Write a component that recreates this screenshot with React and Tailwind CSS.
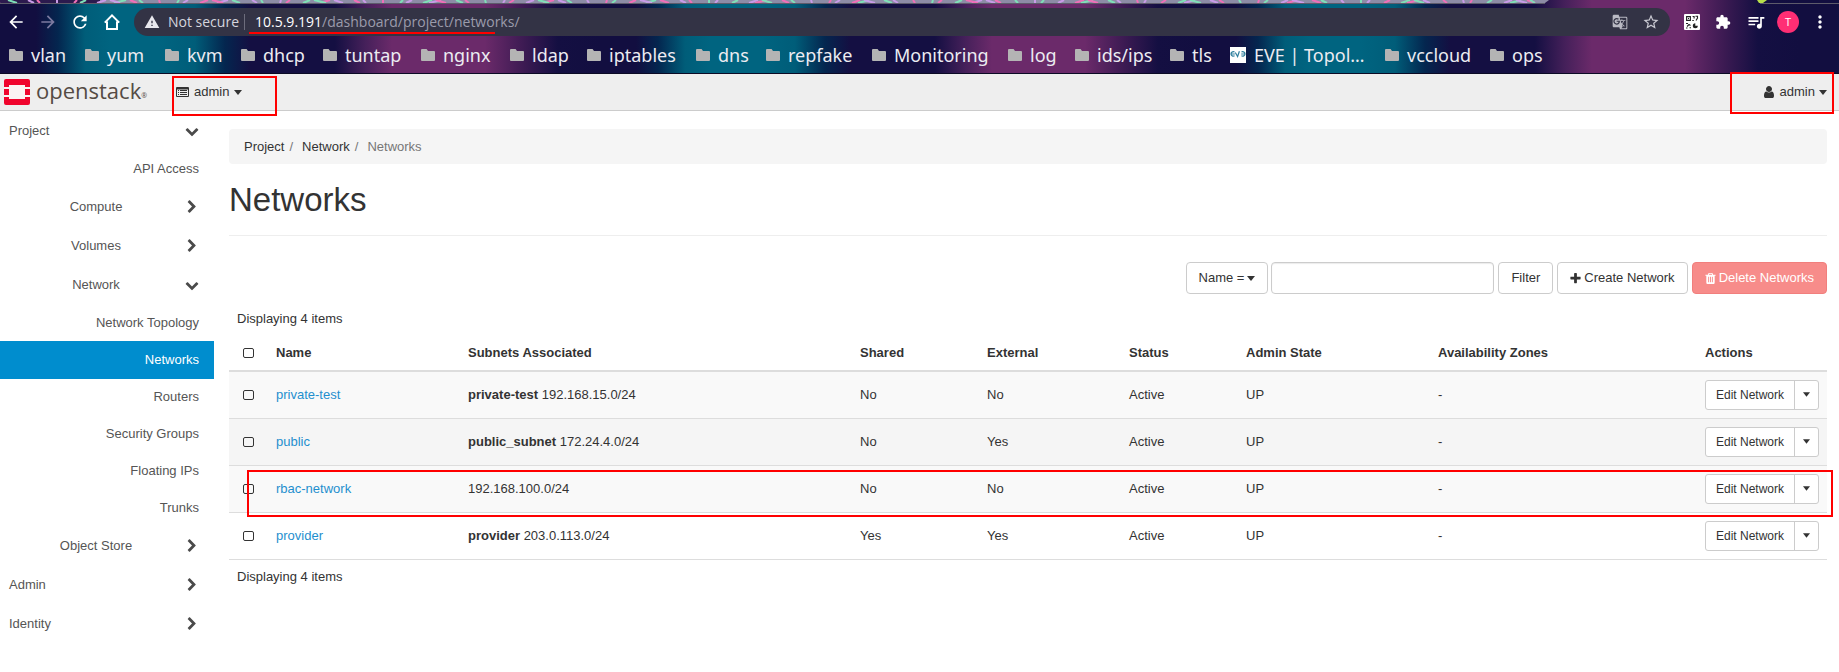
import React from "react";
import {
  MdArrowBack,
  MdArrowForward,
  MdRefresh,
  MdWarning,
  MdGTranslate,
  MdStarBorder,
  MdExtension,
  MdQueueMusic,
  MdMoreVert,
} from "react-icons/md";

const GLYPHS = {
  user: "M1536 1399q0 109-62.5 187t-150.5 78h-854q-88 0-150.5-78t-62.5-187q0-85 8.5-160.5t31.5-152 58.5-131 94-89 134.5-34.5q131 128 313 128t313-128q76 0 134.5 34.5t94 89 58.5 131 31.5 152 8.5 160.5zm-256-887q0 159-112.5 271.5t-271.5 112.5-271.5-112.5-112.5-271.5 112.5-271.5 271.5-112.5 271.5 112.5 112.5 271.5z",
  right:
    "M1363 877l-742 742q-19 19-45 19t-45-19l-166-166q-19-19-19-45t19-45l531-531-531-531q-19-19-19-45t19-45l166-166q19-19 45-19t45 19l742 742q19 19 19 45t-19 45z",
  down: "M1683 808l-742 741q-19 19-45 19t-45-19l-742-741q-19-19-19-45.5t19-45.5l166-165q19-19 45-19t45 19l531 531 531-531q19-19 45-19t45 19l166 165q19 19 19 45.5t-19 45.5z",
  plus: "M1600 736v192q0 40-28 68t-68 28h-416v416q0 40-28 68t-68 28h-192q-40 0-68-28t-28-68v-416h-416q-40 0-68-28t-28-68v-192q0-40 28-68t68-28h416v-416q0-40 28-68t68-28h192q40 0 68 28t28 68v416h416q40 0 68 28t28 68z",
  trash:
    "M704 1376v-704q0-14-9-23t-23-9h-64q-14 0-23 9t-9 23v704q0 14 9 23t23 9h64q14 0 23-9t9-23zm256 0v-704q0-14-9-23t-23-9h-64q-14 0-23 9t-9 23v704q0 14 9 23t23 9h64q14 0 23-9t9-23zm256 0v-704q0-14-9-23t-23-9h-64q-14 0-23 9t-9 23v704q0 14 9 23t23 9h64q14 0 23-9t9-23zm-544-992h448l-48-117q-7-9-17-11h-317q-10 2-17 11zm928 32v64q0 14-9 23t-23 9h-96v948q0 83-47 143.5t-113 60.5h-832q-66 0-113-58.5t-47-141.5v-952h-96q-14 0-23-9t-9-23v-64q0-14 9-23t23-9h309l70-167q15-37 54-63t79-26h320q40 0 79 26t54 63l70 167h309q14 0 23 9t9 23z",
};

function Glyph({ name, className }) {
  return (
    <svg viewBox="0 0 1792 1792" fill="currentColor" aria-hidden="true" className={`shrink-0 ${className}`}>
      <path d={GLYPHS[name]} />
    </svg>
  );
}

function Caret({ className = "w-2" }) {
  return (
    <svg viewBox="0 0 8 5" fill="currentColor" aria-hidden="true" className={`h-[5px] shrink-0 ${className}`}>
      <path d="M0 0h8L4 5z" />
    </svg>
  );
}

const SPARKS = ["#f06fb8", "#e9f06a", "#7fe0b8", "#ffd95a", "#c99be8", "#9ff08a"];

function TabStrip() {
  const marks = Array.from({ length: 120 }, (_, i) => ({
    x: i * 13 + ((i * 37) % 11),
    dx: ((i * 53) % 25) - 12,
    color: SPARKS[(i * 7 + (i % 4)) % SPARKS.length],
  }));
  return (
    <svg viewBox="0 0 1839 4" preserveAspectRatio="none" aria-hidden="true" className="block h-1 w-full">
      <path d="M0 0H1549L1545 3H0z" fill="#8d8ca6" />
      <path d="M0 0H100V3H0z" fill="#2c1a4e" />
      {marks.map((m) => (
        <path key={m.x} d={`M${Math.min(m.x, 1535)} 3l${m.dx} -3`} stroke={m.color} strokeWidth="2" />
      ))}
      <path d="M0 3H1545V4H0z" fill="#5d5b6b" />
      <path d="M1757 0h10l-4 3h-4z" fill="#b8e04a" />
      <path d="M1760 3H1839V4H1760z" fill="#5d5b6b" />
    </svg>
  );
}

function HomeIcon() {
  return (
    <svg viewBox="0 0 16 16" fill="none" stroke="currentColor" strokeWidth="2" aria-hidden="true" className="size-4">
      <path d="M0.8 8.6 8 1.4l7.2 7.2M3 7.5V15h10V7.5" />
    </svg>
  );
}

function QrIcon() {
  return (
    <svg viewBox="0 0 16 16" aria-hidden="true" className="size-4">
      <rect width="16" height="16" rx="1" fill="#fff" />
      <g fill="none" stroke="#222" strokeWidth="1.1">
        <path d="M2.600 2.600h3.800v3.800H2.600zM8.600 2.500h1.500v2M8.300 6.500h1.500M11.500 2.200h2v1.800l-1.500 2.600M2 9.500h2M3 12.500l2-2 1.500 1M2 14h1.500M5.500 13.800h1.500" />
      </g>
      <path d="M4 4h1v1H4zM11.300 9.200v2.500h2.500a2.500 2.500 0 1 1-2.500-2.500z" fill="#222" />
    </svg>
  );
}

function Folder() {
  return (
    <svg viewBox="0 0 14 12" aria-hidden="true" className="h-3 w-3.5 shrink-0">
      <path d="M1 0h4.6L7 2h6a1 1 0 0 1 1 1v8a1 1 0 0 1-1 1H1a1 1 0 0 1-1-1V1a1 1 0 0 1 1-1z" fill="#b4b4b4" />
    </svg>
  );
}

function EveIcon() {
  return (
    <svg viewBox="0 0 16 16" aria-hidden="true" className="size-4 shrink-0">
      <rect width="16" height="16" fill="#fff" />
      <g fill="none" stroke="#2f7f9e" strokeWidth="1.2">
        <path d="M4.500 4.800C2.200 4.200.8 5.600 1 7.200S3 9.600 4.600 8.800M1.500 7h3.300M5.300 5.500l2.300 4 1.800-5.300M11.500 4.800c2.300-.6 3.700.8 3.500 2.400s-2 2.400-3.600 1.600M14.500 7h-3.300" />
      </g>
    </svg>
  );
}

const BOOKMARKS = [
  { label: "vlan", width: "w-[76px]" },
  { label: "yum", width: "w-[80px]" },
  { label: "kvm", width: "w-[76px]" },
  { label: "dhcp", width: "w-[82px]" },
  { label: "tuntap", width: "w-[98px]" },
  { label: "nginx", width: "w-[89px]" },
  { label: "ldap", width: "w-[77px]" },
  { label: "iptables", width: "w-[109px]" },
  { label: "dns", width: "w-[70px]" },
  { label: "repfake", width: "w-[106px]" },
  { label: "Monitoring", width: "w-[136px]" },
  { label: "log", width: "w-[67px]" },
  { label: "ids/ips", width: "w-[95px]" },
  { label: "tls", width: "w-[60px]" },
  { label: "EVE | Topol…", width: "w-[155px]", icon: "eve" },
  { label: "vccloud", width: "w-[105px]" },
  { label: "ops", width: "w-[60px]" },
];

function BrowserChrome() {
  return (
    <header className="flex flex-col border-b border-[#0b0a25] bg-[repeating-linear-gradient(90deg,#120e40_0px,#120e40_36px,#04264f_58px,#005d79_85px,#006480_110px,#006480_160px,#005d79_195px,#04264f_225px,#140f42_250px,#140f42_335px,#45205a_365px,#6b2a6a_392px,#6b2a6a_485px,#3b1a52_525px,#140f42_558px,#120e40_600px)] font-['Open_Sans','Noto_Sans',sans-serif]">
      <TabStrip />
      <div className="flex h-9 items-center pr-[9px] pl-[6px] text-white">
        <nav aria-label="Browser" className="flex w-32 shrink-0 items-center gap-3">
          <button aria-label="Back"><MdArrowBack className="size-5" /></button>
          <button aria-label="Forward" className="text-[#7c7aa0]"><MdArrowForward className="size-5" /></button>
          <button aria-label="Reload"><MdRefresh className="size-5" /></button>
          <button aria-label="Home" className="ml-0.5"><HomeIcon /></button>
        </nav>
        <div className="flex h-7 flex-1 items-center rounded-full bg-[#333345] px-2.5 text-sm">
          <MdWarning className="size-4 text-[#e8e8ee]" />
          <span className="ml-2 w-[76px] whitespace-nowrap text-[#d5d5de]">Not secure</span>
          <span className="h-4 w-px bg-[#6d6d7c]" />
          <span className="relative ml-2.5 text-[#9b9bab]">
            <span className="text-white">10.5.9.191</span>/dashboard/project/networks/
            <span className="absolute top-5 -left-1.5 h-0.5 w-[246px] bg-[#f00]" />
          </span>
          <span className="flex-1" />
          <button aria-label="Translate" className="text-[#b9b9c3]"><MdGTranslate className="size-4" /></button>
          <button aria-label="Bookmark" className="ml-3.5 text-[#c9c9d2]"><MdStarBorder className="size-[18px]" /></button>
        </div>
        <div className="ml-3.5 flex items-center gap-[15px]">
          <button aria-label="QR code"><QrIcon /></button>
          <button aria-label="Extensions"><MdExtension className="size-4" /></button>
          <button aria-label="Media"><MdQueueMusic className="size-5" /></button>
          <button className="-ml-1 flex size-[22px] items-center justify-center rounded-full bg-[#ff2e74] text-[11px]">T</button>
          <button aria-label="Menu" className="-ml-1"><MdMoreVert className="size-5" /></button>
        </div>
      </div>
      <nav aria-label="Bookmarks" className="flex h-[33px] items-center pb-1 pl-[9px] font-['Noto_Sans',sans-serif] text-lg leading-none text-[#ececf2]">
        {BOOKMARKS.map((b) => (
          <a key={b.label} href="#" className={`flex shrink-0 items-center gap-2 whitespace-nowrap ${b.width}`}>
            {b.icon ? <EveIcon /> : <Folder />}
            {b.label}
          </a>
        ))}
      </nav>
    </header>
  );
}

function OpenstackMark() {
  return (
    <svg viewBox="0 0 26 26" aria-hidden="true" className="size-[26px] shrink-0">
      <path d="M5 6h16v14H5zM0 8h26v2H0zM0 16h26v2H0z" fill="#fbf3f3" />
      <path
        d="M2 0h22a2 2 0 0 1 2 2v6h-5V6H5v2H0V2a2 2 0 0 1 2-2zM0 10h5v6H0zM21 10h5v6h-5zM0 18h5v2h16v-2h5v6a2 2 0 0 1-2 2H2a2 2 0 0 1-2-2z"
        fill="#f0042d"
      />
    </svg>
  );
}

function ListIcon() {
  return (
    <svg viewBox="0 0 13 10" aria-hidden="true" className="h-2.5 w-[13px]">
      <path d="M1 0h11a1 1 0 0 1 1 1v8a1 1 0 0 1-1 1H1a1 1 0 0 1-1-1V1a1 1 0 0 1 1-1zM1 2.500V9h11V2.500z" fillRule="evenodd" fill="#333" />
      <path d="M2 3.500h1M4 3.500h7M2 5.500h1M4 5.500h7M2 7.500h1M4 7.500h7" stroke="#333" />
    </svg>
  );
}

function Navbar() {
  return (
    <div className="flex h-[37px] items-center border-b border-[#ccc] bg-[#eee] pr-3 pl-1">
      <a href="#" className="flex w-[172px] items-center gap-1.5">
        <OpenstackMark />
        <span className="flex items-end pb-1 font-['Open_Sans',sans-serif] text-[22px] leading-7 font-medium text-[#544b44]">
          openstack<span className="text-[7px] leading-4">®</span>
        </span>
      </a>
      <button className="relative flex items-center gap-[5px]">
        <ListIcon />
        admin
        <Caret />
        <span className="absolute -top-[7px] -left-1 h-10 w-[105px] border-2 border-[#f00]" />
      </button>
      <span className="flex-1" />
      <button className="relative flex items-center gap-1">
        <Glyph name="user" className="size-3.5" />
        admin
        <Caret />
        <span className="absolute -top-[11px] -right-[7px] h-[42px] w-[104px] border-2 border-[#f00]" />
      </button>
    </div>
  );
}

const MENU = [
  { label: "Project", kind: "top", open: true },
  { label: "API Access", kind: "leaf" },
  { label: "Compute", kind: "group" },
  { label: "Volumes", kind: "group" },
  { label: "Network", kind: "group", open: true },
  { label: "Network Topology", kind: "leaf" },
  { label: "Networks", kind: "leaf", active: true },
  { label: "Routers", kind: "leaf" },
  { label: "Security Groups", kind: "leaf" },
  { label: "Floating IPs", kind: "leaf" },
  { label: "Trunks", kind: "leaf" },
  { label: "Object Store", kind: "group" },
  { label: "Admin", kind: "top" },
  { label: "Identity", kind: "top" },
];

function Sidebar() {
  return (
    <nav aria-label="Dashboard" className="flex w-[214px] shrink-0 flex-col text-[#555]">
      {MENU.map((item) =>
        item.kind === "leaf" ? (
          <a
            key={item.label}
            href="#"
            className={
              item.active
                ? "-mb-px flex h-[38px] items-center justify-end bg-[#008dce] pr-[15px] text-white"
                : "flex h-[37px] items-center justify-end pr-[15px]"
            }
          >
            {item.label}
          </a>
        ) : (
          <button
            key={item.label}
            className={
              item.kind === "top"
                ? "flex h-[39px] items-center justify-between pr-[15px] pl-[9px]"
                : "flex h-[39px] items-center pr-[15px] pl-[7px]"
            }
          >
            <span className={item.kind === "top" ? "" : "flex-1 text-center"}>{item.label}</span>
            <Glyph name={item.open ? "down" : "right"} className="size-3.5 text-[#4a4a4a]" />
          </button>
        )
      )}
    </nav>
  );
}

const COLUMNS = [
  { label: "Name", width: "w-[192px]" },
  { label: "Subnets Associated", width: "w-[392px]" },
  { label: "Shared", width: "w-[127px]" },
  { label: "External", width: "w-[142px]" },
  { label: "Status", width: "w-[117px]" },
  { label: "Admin State", width: "w-[192px]" },
  { label: "Availability Zones", width: "w-[267px]" },
  { label: "Actions", width: "w-[130px]" },
];

const ROWS = [
  { name: "private-test", subnet: "private-test", cidr: "192.168.15.0/24", shared: "No", external: "No", bg: "bg-[#f9f9f9]" },
  { name: "public", subnet: "public_subnet", cidr: "172.24.4.0/24", shared: "No", external: "Yes", bg: "bg-[#f5f5f5]" },
  { name: "rbac-network", subnet: "", cidr: "192.168.100.0/24", shared: "No", external: "No", bg: "bg-[#f9f9f9]", marked: true },
  { name: "provider", subnet: "provider", cidr: "203.0.113.0/24", shared: "Yes", external: "Yes", bg: "bg-white" },
];

function Check({ label }) {
  return (
    <input
      type="checkbox"
      aria-label={label}
      className="ml-1.5 block h-2.5 w-[11px] appearance-none rounded-[2px] border border-[#333]"
    />
  );
}

function NetworkTable() {
  return (
    <table className="w-full table-fixed border-collapse text-left">
      <thead>
        <tr className="h-[35px] border-b-2 border-[#ddd]">
          <th className="w-[39px] px-2"><Check label="Select all" /></th>
          {COLUMNS.map((c) => (
            <th key={c.label} className={`px-2 font-bold ${c.width}`}>{c.label}</th>
          ))}
        </tr>
      </thead>
      <tbody>
        {ROWS.map((r) => (
          <tr key={r.name} className={`relative h-[47px] border-b border-[#ddd] ${r.bg}`}>
            <td className="px-2"><Check label={`Select ${r.name}`} /></td>
            <td className="px-2"><a href="#" className="text-[#1f8fce]">{r.name}</a></td>
            <td className="px-2">
              {r.subnet && <strong>{r.subnet} </strong>}
              {r.cidr}
            </td>
            <td className="px-2">{r.shared}</td>
            <td className="px-2">{r.external}</td>
            <td className="px-2">Active</td>
            <td className="px-2">UP</td>
            <td className="px-2">-</td>
            <td className="px-2">
              <div className="flex h-[30px] rounded-[3px] border border-[#ccc] bg-white text-xs">
                <button className="flex-1 whitespace-nowrap">Edit Network</button>
                <button aria-label="More actions" className="flex w-6 items-center justify-center border-l border-[#ccc]">
                  <Caret className="w-[7px]" />
                </button>
              </div>
              {r.marked && (
                <span className="pointer-events-none absolute top-[5px] -right-1.5 left-[18px] z-10 h-[47px] border-2 border-[#f00]" />
              )}
            </td>
          </tr>
        ))}
      </tbody>
    </table>
  );
}

const BUTTON = "flex h-8 items-center gap-[3px] rounded border border-[#ccc] bg-white px-3 whitespace-nowrap";

export default function App() {
  return (
    <div className="min-h-screen overflow-x-hidden bg-white font-['Liberation_Sans',Arial,sans-serif] text-[13px] leading-[18px] text-[#333]">
      <BrowserChrome />
      <Navbar />
      <div className="flex">
        <Sidebar />
        <main className="flex-1 pt-[18px] pr-3 pl-[15px]">
          <nav aria-label="Breadcrumb" className="flex h-[35px] items-center rounded bg-[#f5f5f5] px-[15px]">
            <a href="#">Project</a>
            <span className="px-[5px] text-[#777]">/</span>
            <a href="#" className="ml-1">Network</a>
            <span className="px-[5px] text-[#777]">/</span>
            <span className="ml-1 text-[#777]">Networks</span>
          </nav>
          <h1 className="mt-[18px] border-b border-[#eee] pb-[17px] text-[33px] leading-9">Networks</h1>
          <form className="mt-[26px] flex justify-end gap-1">
            <button type="button" className={BUTTON}>
              Name = <Caret />
            </button>
            <input
              type="text"
              aria-label="Filter value"
              className="-ml-px h-8 w-[223px] rounded border border-[#ccc] px-3 shadow-[inset_0_1px_1px_rgba(0,0,0,0.08)]"
            />
            <button type="button" className={BUTTON}>Filter</button>
            <button type="button" className={BUTTON}>
              <Glyph name="plus" className="-mx-px size-[13px]" />
              Create Network
            </button>
            <button
              type="button"
              className="flex h-8 items-center gap-[3px] rounded border border-[#f17f7d] bg-[#f78c8a] px-3 whitespace-nowrap text-white"
            >
              <Glyph name="trash" className="-mx-px size-[13px]" />
              Delete Networks
            </button>
          </form>
          <p className="mt-4 px-2 pb-2">Displaying 4 items</p>
          <NetworkTable />
          <p className="px-2 pt-2">Displaying 4 items</p>
        </main>
      </div>
    </div>
  );
}
